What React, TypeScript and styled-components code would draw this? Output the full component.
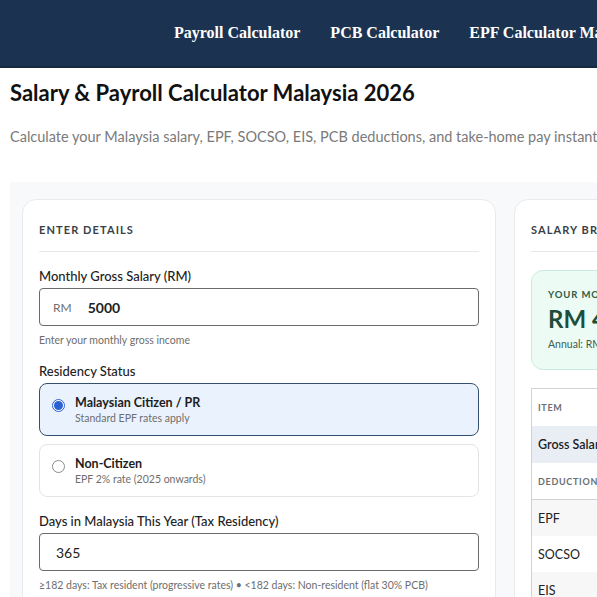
import { createGlobalStyle } from "styled-components";
import styled from "styled-components";

const GlobalStyle = createGlobalStyle`
  html, body {
    margin: 0;
    padding: 0;
    background: #ffffff;
    overflow: hidden;
  }
  body {
    font-family: "Lato", "Noto Sans", sans-serif;
    color: #1a1a1a;
  }
  * { box-sizing: border-box; }
`;

const NavBar = styled.nav`
  height: 68px;
  background: #1b3351;
  border-bottom: 2px solid #17293f;
  display: flex;
  align-items: center;
  padding-left: 174px;
  gap: 30px;
  white-space: nowrap;
`;

const NavLink = styled.a`
  font-family: "Liberation Serif", "Times New Roman", serif;
  font-weight: 700;
  font-size: 16px;
  color: #ffffff;
  text-decoration: none;
`;

const Page = styled.main`
  width: 1030px;
  padding: 0 10px;
`;

const Title = styled.h1`
  margin: 12px 0 0;
  font-size: 22px;
  font-weight: 700;
  color: #111;
  line-height: 26px;
`;

const Subtitle = styled.p`
  margin: 21px 0 0;
  font-size: 14.5px;
  color: #7a7a7a;
  line-height: 20px;
  white-space: nowrap;
`;

const Workspace = styled.section`
  margin-top: 35px;
  background: #f8f9fa;
  padding: 17px 12px 0;
  display: grid;
  grid-template-columns: 474px 474px;
  gap: 18px;
`;

const Card = styled.div`
  background: #ffffff;
  border: 1px solid #e8eaed;
  border-radius: 14px;
  padding: 21px 16px 16px;
  min-height: 420px;
`;

const CardHeading = styled.h2`
  margin: 0;
  font-size: 11px;
  font-weight: 700;
  letter-spacing: 1.1px;
  color: #3a3f47;
  padding-bottom: 12px;
  border-bottom: 1px solid #e6e8eb;
  line-height: 18px;
  white-space: nowrap;
`;

const Field = styled.div`
  margin-top: 16px;
`;

const Label = styled.label`
  display: block;
  font-size: 13px;
  font-weight: 500;
  color: #222;
  line-height: 16px;
  margin-bottom: 4px;
`;

const InputBox = styled.div`
  height: 38px;
  border: 1px solid #6b6b6b;
  border-radius: 4px;
  display: flex;
  align-items: center;
  padding-left: 13px;
  gap: 16px;
`;

const Prefix = styled.span`
  font-size: 12px;
  color: #6f6f6f;
`;

const Value = styled.span<{ $bold?: boolean }>`
  font-size: 14px;
  font-weight: ${(p) => (p.$bold ? 700 : 400)};
  color: #222;
  padding-left: ${(p) => (p.$bold ? 0 : 3)}px;
`;

const Hint = styled.div`
  font-size: 10.5px;
  color: #6e6e6e;
  margin-top: 7px;
  line-height: 14px;
  white-space: nowrap;
`;

const Options = styled.div`
  display: flex;
  flex-direction: column;
  gap: 8px;
`;

const Option = styled.div<{ $active?: boolean }>`
  height: 53px;
  border-radius: 8px;
  border: 1px solid ${(p) => (p.$active ? "#33506e" : "#e2e4e7")};
  background: ${(p) => (p.$active ? "#eaf3fd" : "#ffffff")};
  display: flex;
  align-items: center;
  padding: 0 12px;
  gap: 10px;
`;

const Radio = styled.span<{ $checked?: boolean }>`
  width: 13px;
  height: 13px;
  border-radius: 50%;
  border: 1px solid ${(p) => (p.$checked ? "#2a62d6" : "#8a8a8a")};
  background: #fff;
  display: flex;
  align-items: center;
  justify-content: center;
  margin-top: -8px;
  &::after {
    content: "";
    width: 9px;
    height: 9px;
    border-radius: 50%;
    background: ${(p) => (p.$checked ? "#2a62d6" : "transparent")};
  }
`;

const OptionText = styled.div`
  display: flex;
  flex-direction: column;
  gap: 2px;
`;

const OptionTitle = styled.span`
  font-size: 12.5px;
  font-weight: 700;
  color: #1d1d1d;
`;

const OptionSub = styled.span`
  font-size: 10.5px;
  color: #6e6e6e;
`;

const NetBox = styled.div`
  margin-top: 18px;
  height: 100px;
  border-radius: 12px;
  border: 1px solid #c8ecdb;
  background: #ecfbf4;
  padding: 18px 16px;
  white-space: nowrap;
`;

const NetLabel = styled.div`
  font-size: 9.5px;
  font-weight: 700;
  letter-spacing: 0.9px;
  color: #2b5c49;
`;

const NetValue = styled.div`
  font-size: 24px;
  font-weight: 700;
  color: #1d4d3b;
  margin-top: 4px;
  line-height: 30px;
`;

const NetSub = styled.div`
  font-size: 10.5px;
  color: #3f5d51;
  margin-top: 4px;
`;

const Table = styled.div`
  margin-top: 18px;
  border: 1px solid #cfd3d8;
  border-bottom: none;
  white-space: nowrap;
`;

const Row = styled.div<{ $tone?: "head" | "gross" | "section" | "odd" | "even" }>`
  height: ${(p) => (p.$tone === "head" || p.$tone === "gross" || p.$tone === "section" ? 37 : 36)}px;
  display: flex;
  align-items: center;
  padding-left: 6px;
  background: ${(p) =>
    p.$tone === "gross" ? "#e9eef5" : p.$tone === "odd" ? "#f7f7f7" : "#ffffff"};
  border-bottom: ${(p) => (p.$tone === "section" ? "1px solid #cfd3d8" : "none")};
`;

const SmallCaps = styled.span`
  font-size: 9px;
  font-weight: 700;
  letter-spacing: 0.7px;
  color: #6a6f76;
`;

const Cell = styled.span<{ $strong?: boolean }>`
  font-size: 12.5px;
  font-weight: ${(p) => (p.$strong ? 600 : 400)};
  color: #222;
`;

export default function App() {
  return (
    <>
      <GlobalStyle />
      <NavBar>
        <NavLink href="#">Payroll Calculator</NavLink>
        <NavLink href="#">PCB Calculator</NavLink>
        <NavLink href="#">EPF Calculator Malaysia</NavLink>
      </NavBar>
      <Page>
        <Title>Salary &amp; Payroll Calculator Malaysia 2026</Title>
        <Subtitle>
          Calculate your Malaysia salary, EPF, SOCSO, EIS, PCB deductions, and take-home pay instantly.
        </Subtitle>
        <Workspace>
          <Card>
            <CardHeading>ENTER DETAILS</CardHeading>
            <Field>
              <Label>Monthly Gross Salary (RM)</Label>
              <InputBox>
                <Prefix>RM</Prefix>
                <Value $bold>5000</Value>
              </InputBox>
              <Hint>Enter your monthly gross income</Hint>
            </Field>
            <Field>
              <Label>Residency Status</Label>
              <Options>
                <Option $active>
                  <Radio $checked />
                  <OptionText>
                    <OptionTitle>Malaysian Citizen / PR</OptionTitle>
                    <OptionSub>Standard EPF rates apply</OptionSub>
                  </OptionText>
                </Option>
                <Option>
                  <Radio />
                  <OptionText>
                    <OptionTitle>Non-Citizen</OptionTitle>
                    <OptionSub>EPF 2% rate (2025 onwards)</OptionSub>
                  </OptionText>
                </Option>
              </Options>
            </Field>
            <Field>
              <Label>Days in Malaysia This Year (Tax Residency)</Label>
              <InputBox>
                <Value>365</Value>
              </InputBox>
              <Hint>
                ≥182 days: Tax resident (progressive rates) • &lt;182 days: Non-resident (flat 30% PCB)
              </Hint>
            </Field>
          </Card>
          <Card>
            <CardHeading>SALARY BREAKDOWN</CardHeading>
            <NetBox>
              <NetLabel>YOUR MONTHLY TAKE-HOME PAY</NetLabel>
              <NetValue>RM 4,337.25</NetValue>
              <NetSub>Annual: RM 52,047.00</NetSub>
            </NetBox>
            <Table>
              <Row $tone="head">
                <SmallCaps>ITEM</SmallCaps>
              </Row>
              <Row $tone="gross">
                <Cell $strong>Gross Salary</Cell>
              </Row>
              <Row $tone="section">
                <SmallCaps>DEDUCTIONS</SmallCaps>
              </Row>
              <Row $tone="odd">
                <Cell>EPF</Cell>
              </Row>
              <Row $tone="even">
                <Cell>SOCSO</Cell>
              </Row>
              <Row $tone="odd">
                <Cell>EIS</Cell>
              </Row>
            </Table>
          </Card>
        </Workspace>
      </Page>
    </>
  );
}
